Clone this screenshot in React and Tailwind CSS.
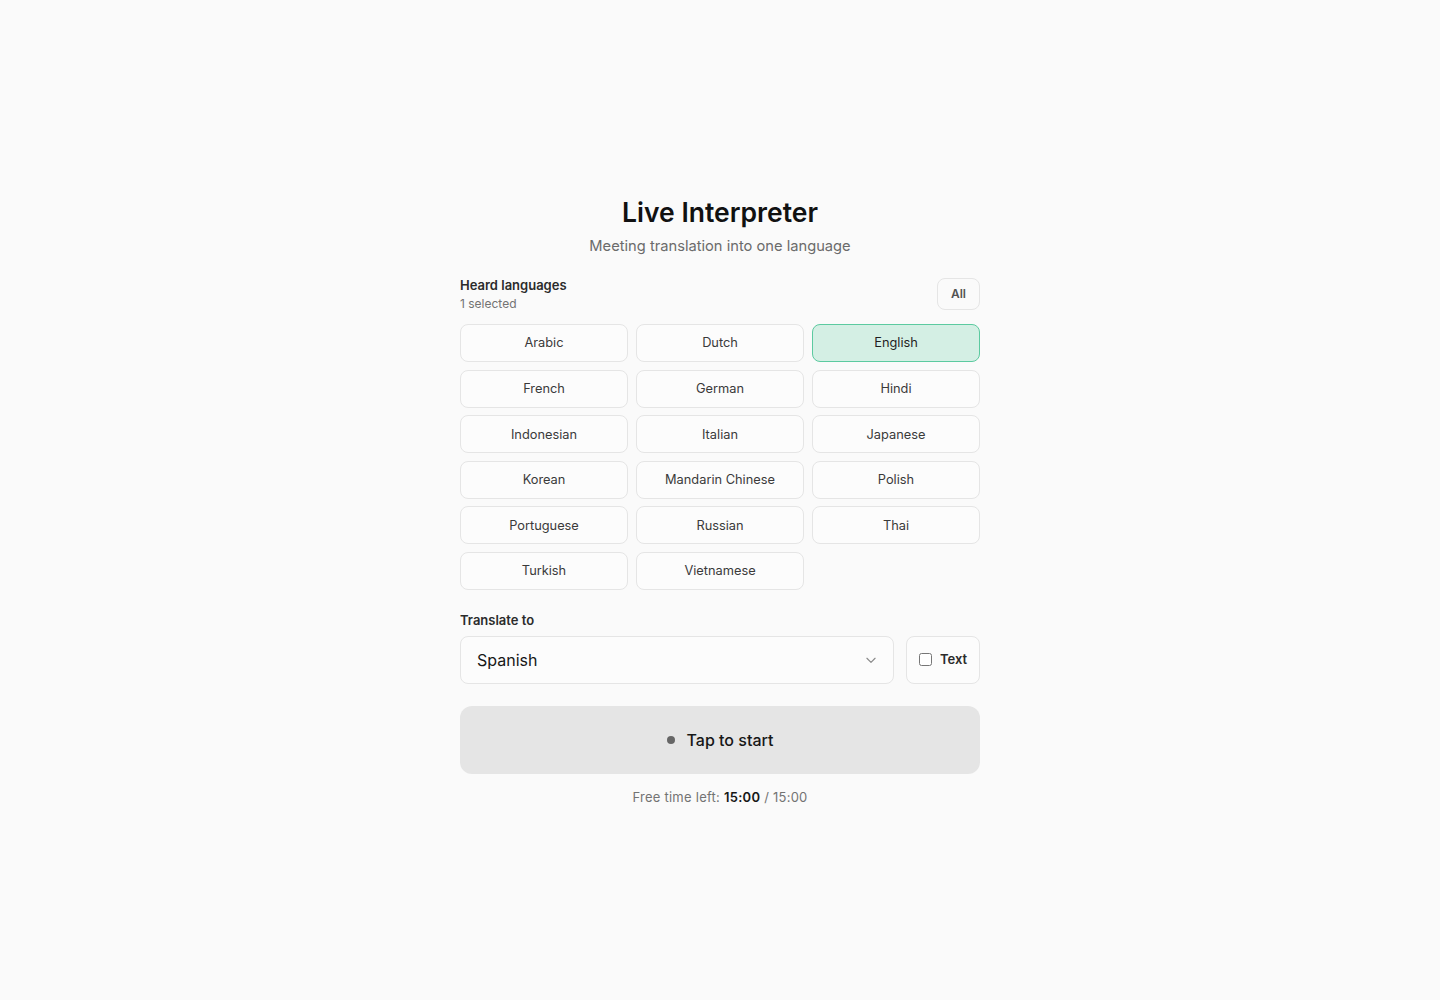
import { useState } from 'react';

const LANGUAGES = [
  'Arabic', 'Dutch', 'English',
  'French', 'German', 'Hindi',
  'Indonesian', 'Italian', 'Japanese',
  'Korean', 'Mandarin Chinese', 'Polish',
  'Portuguese', 'Russian', 'Thai',
  'Turkish', 'Vietnamese',
];

export default function App() {
  const [heard, setHeard] = useState(['English']);
  const [target, setTarget] = useState('Spanish');
  const [showText, setShowText] = useState(false);

  const toggle = (lang) => {
    setHeard((prev) =>
      prev.includes(lang) ? prev.filter((l) => l !== lang) : [...prev, lang]
    );
  };

  return (
    <div
      className="min-h-screen bg-[#fafafa] text-[#171717] flex justify-center pt-[194px]"
      style={{ fontFamily: 'Inter, "Noto Sans", sans-serif' }}
    >
      <div className="w-[520px]">
        <h1 className="text-center text-[26.5px] font-semibold leading-[36px] text-[#111]">
          Live Interpreter
        </h1>
        <p className="mt-[5px] text-center text-[14.7px] leading-[22px] text-[#6b6b6b]">
          Meeting translation into one language
        </p>

        {/* Heard languages */}
        <div className="mt-[19px] flex items-start justify-between">
          <div>
            <div className="text-[13px] font-semibold leading-[18px] text-[#2b2b2b]">
              Heard languages
            </div>
            <div className="mt-px text-[12px] leading-[17px] text-[#737373]">
              {heard.length} selected
            </div>
          </div>
          <button
            onClick={() => setHeard([...LANGUAGES])}
            className="mt-[2px] h-[32px] w-[43px] rounded-lg border border-[#e5e5e5] bg-[#fafafa] text-[12px] font-semibold text-[#525252]"
          >
            All
          </button>
        </div>

        <div className="mt-[12px] grid grid-cols-3 gap-x-[8px] gap-y-[7.6px]">
          {LANGUAGES.map((lang) => {
            const on = heard.includes(lang);
            return (
              <button
                key={lang}
                onClick={() => toggle(lang)}
                className={
                  on
                    ? 'h-[38px] rounded-lg border border-[#5ccaa0] bg-[#d4efe4] text-[12.8px] text-[#1f1f1f]'
                    : 'h-[38px] rounded-lg border border-[#e5e5e5] bg-[#fcfcfc] text-[12.8px] text-[#3a3a3a]'
                }
              >
                {lang}
              </button>
            );
          })}
        </div>

        {/* Target language */}
        <div className="mt-[21px] text-[13px] font-semibold leading-[18px] text-[#2b2b2b]">
          Translate to
        </div>
        <div className="mt-[7px] flex gap-[12px]">
          <div className="relative flex-1">
            <select
              value={target}
              onChange={(e) => setTarget(e.target.value)}
              className="h-[48px] w-full appearance-none rounded-lg border border-[#e5e5e5] bg-[#fcfcfc] pl-[16px] pr-[40px] text-[16px] text-[#171717] outline-none"
            >
              <option>Spanish</option>
              <option>English</option>
              <option>French</option>
              <option>German</option>
            </select>
            <svg
              className="pointer-events-none absolute right-[16px] top-1/2 -translate-y-1/2"
              width="14"
              height="14"
              viewBox="0 0 24 24"
              fill="none"
              stroke="#8a8a8a"
              strokeWidth="2"
              strokeLinecap="round"
              strokeLinejoin="round"
            >
              <path d="M5 9l7 7 7-7" />
            </svg>
          </div>
          <label className="flex h-[48px] w-[74px] cursor-pointer items-center justify-center gap-[8px] rounded-lg border border-[#e5e5e5] bg-[#fcfcfc] text-[13px] font-semibold text-[#2b2b2b]">
            <input
              type="checkbox"
              checked={showText}
              onChange={(e) => setShowText(e.target.checked)}
              className="h-[13px] w-[13px]"
            />
            Text
          </label>
        </div>

        {/* Start */}
        <button className="mt-[22px] flex h-[68px] w-full items-center justify-center gap-[12px] rounded-xl bg-[#e5e5e5] text-[16px] font-medium text-[#171717]">
          <span className="h-[8px] w-[8px] rounded-full bg-[#666]" />
          Tap to start
        </button>

        <p className="mt-[14px] text-center text-[13px] leading-[18px] tracking-[0.25px] text-[#737373]">
          Free time left: <span className="font-semibold text-[#171717]">15:00</span> / 15:00
        </p>
      </div>
    </div>
  );
}
